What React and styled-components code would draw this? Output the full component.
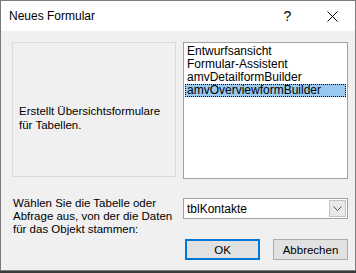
import styled, { createGlobalStyle } from "styled-components";

const Global = createGlobalStyle`
  html, body {
    margin: 0;
    padding: 0;
    background: #3b3b3b;
  }
  body {
    font-family: "Liberation Sans", Arial, sans-serif;
    font-size: 11.5px;
    color: #000;
  }
`;

const Window = styled.div`
  width: 356px;
  height: 271px;
  box-sizing: border-box;
  border: 1px solid #7a7a7a;
  background: #f0f0f0;
  display: flex;
  flex-direction: column;
`;

const TitleBar = styled.div`
  height: 30px;
  background: #fff;
  display: flex;
  align-items: center;
  padding-left: 8px;
`;

const Title = styled.div`
  flex: 1;
  font-size: 12px;
`;

const TitleButton = styled.div`
  width: 45px;
  height: 30px;
  display: flex;
  align-items: center;
  justify-content: center;
  font-size: 14px;
`;

const Body = styled.div`
  flex: 1;
  display: grid;
  grid-template-columns: 164px 165px;
  grid-template-rows: 137px 1fr;
  column-gap: 7px;
  padding: 11px 8px 0 11px;
  white-space: nowrap;
`;

const Description = styled.div`
  height: 135px;
  box-sizing: border-box;
  border: 1px solid #dadada;
  display: flex;
  flex-direction: column;
  justify-content: center;
  padding: 17px 6px 0;
`;

const DescriptionText = styled.div`
  line-height: 14px;
`;

const ListBox = styled.div`
  background: #fff;
  border: 1px solid #a0a0a0;
  padding: 2px 1px;
  display: flex;
  flex-direction: column;
  font-size: 12px;
`;

const ListItem = styled.div`
  height: 13px;
  line-height: 13px;
  padding-left: 2px;
  box-sizing: border-box;
  background: ${(p) => (p.$selected ? "#99c9ef" : "transparent")};
  outline: ${(p) => (p.$selected ? "1px dotted #000" : "none")};
  outline-offset: -1px;
`;

const Label = styled.div`
  padding: 18px 0 0 1px;
  line-height: 13px;
`;

const Controls = styled.div`
  display: flex;
  flex-direction: column;
  padding-top: 19px;
`;

const Combo = styled.div`
  height: 21px;
  box-sizing: border-box;
  background: #fff;
  border: 1px solid #a0a0a0;
  display: flex;
  align-items: center;
  padding: 0 1px 0 3px;
  font-size: 12px;
`;

const ComboText = styled.div`
  flex: 1;
`;

const ComboButton = styled.div`
  width: 17px;
  height: 17px;
  box-sizing: border-box;
  border: 1px solid #c3c3c3;
  background: #e8e8e8;
  display: flex;
  align-items: center;
  justify-content: center;
`;

const Buttons = styled.div`
  display: flex;
  justify-content: space-between;
  margin-top: 20px;
  padding-left: 2px;
`;

const Button = styled.div`
  width: 75px;
  height: 21px;
  box-sizing: border-box;
  background: #e1e1e1;
  border: ${(p) => (p.$default ? "2px solid #0078d7" : "1px solid #adadad")};
  display: flex;
  align-items: center;
  justify-content: center;
`;

const items = [
  "Entwurfsansicht",
  "Formular-Assistent",
  "amvDetailformBuilder",
  "amvOverviewformBuilder",
];

export default function App() {
  return (
    <>
      <Global />
      <Window>
        <TitleBar>
          <Title>Neues Formular</Title>
          <TitleButton>?</TitleButton>
          <TitleButton>
            <svg width="11" height="11" viewBox="0 0 11 11">
              <path d="M0.5 0.5 L10.5 10.5 M10.5 0.5 L0.5 10.5" stroke="#000" strokeWidth="1" />
            </svg>
          </TitleButton>
        </TitleBar>
        <Body>
          <Description>
            <DescriptionText>
              Erstellt Übersichtsformulare
              <br />
              für Tabellen.
            </DescriptionText>
          </Description>
          <ListBox>
            {items.map((t, i) => (
              <ListItem key={t} $selected={i === 3}>
                {t}
              </ListItem>
            ))}
          </ListBox>
          <Label>
            Wählen Sie die Tabelle oder
            <br />
            Abfrage aus, von der die Daten
            <br />
            für das Objekt stammen:
          </Label>
          <Controls>
            <Combo>
              <ComboText>tblKontakte</ComboText>
              <ComboButton>
                <svg width="9" height="5" viewBox="0 0 9 5">
                  <path d="M0.5 0.5 L4.5 4.5 L8.5 0.5" stroke="#555" fill="none" />
                </svg>
              </ComboButton>
            </Combo>
            <Buttons>
              <Button $default>OK</Button>
              <Button>Abbrechen</Button>
            </Buttons>
          </Controls>
        </Body>
      </Window>
    </>
  );
}
